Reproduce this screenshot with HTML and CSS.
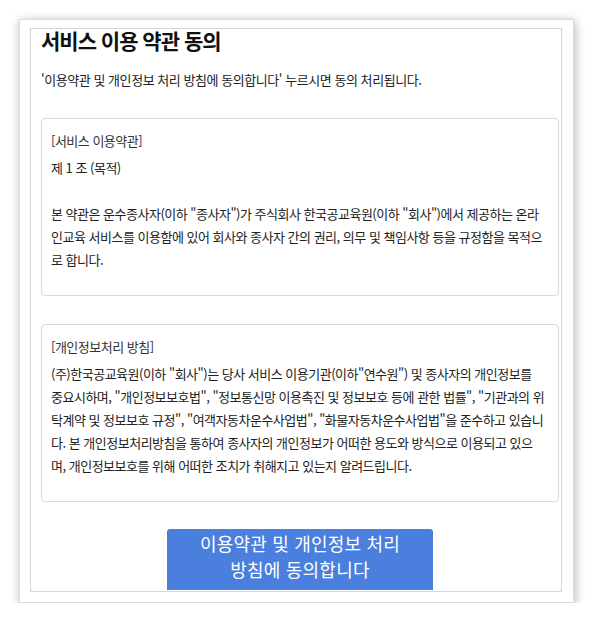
FILE: index.html
```html
<!DOCTYPE html>
<html lang="ko">
<head>
    <meta charset="UTF-8" />
    <meta name="viewport" content="width=device-width, initial-scale=1.0" />
    <title>서비스 이용 약관 동의</title>
    <link rel="stylesheet" href="styles.css">
</head>
<body>
    <div class="frame">
        <div class="agree-box">
            <h2 class="agree-title">서비스 이용 약관 동의</h2>
            <p class="agree-desc">'이용약관 및 개인정보 처리 방침에 동의합니다' 누르시면 동의 처리됩니다.</p>

            <div class="terms-card">
                <p class="terms-head">[서비스 이용약관]</p>
                <p class="terms-text">제 1 조 (목적)<br><br>본 약관은 운수종사자(이하 "종사자")가 주식회사 한국공교육원(이하 "회사")에서 제공하는 온라<br>인교육 서비스를 이용함에 있어 회사와 종사자 간의 권리, 의무 및 책임사항 등을 규정함을 목적으<br>로 합니다.</p>
            </div>

            <div class="terms-card">
                <p class="terms-head">[개인정보처리 방침]</p>
                <p class="terms-text">(주)한국공교육원(이하 "회사")는 당사 서비스 이용기관(이하"연수원") 및 종사자의 개인정보를<br>중요시하며, "개인정보보호법", "정보통신망 이용촉진 및 정보보호 등에 관한 법률", "기관과의 위<br>탁계약 및 정보보호 규정", "여객자동차운수사업법", "화물자동차운수사업법"을 준수하고 있습니<br>다. 본 개인정보처리방침을 통하여 종사자의 개인정보가 어떠한 용도와 방식으로 이용되고 있으<br>며, 개인정보보호를 위해 어떠한 조치가 취해지고 있는지 알려드립니다.</p>
            </div>

            <div class="btn-row">
                <button class="agree-btn">이용약관 및 개인정보 처리 방침에 동의합니다</button>
            </div>
        </div>
    </div>
</body>
</html>
```

FILE: styles.css
```css
    body {
        margin: 0;
        background-color: #ffffff;
        font-family: "Noto Sans CJK KR", "Noto Sans", sans-serif;
        color: #222222;
    }

    .frame {
        box-sizing: border-box;
        width: 555px;
        height: 584px;
        margin: 19px 0 0 19px;
        padding: 8px 0 0 10px;
        border: 1px solid #dcdcdc;
        background-color: #ffffff;
        box-shadow: 1px 2px 10px rgba(0, 0, 0, 0.3);
    }

    .agree-box {
        box-sizing: border-box;
        width: 532px;
        height: 564px;
        padding: 0 2px 0 10px;
        border: 1px solid #d6d6d6;
    }

    .agree-title {
        margin: 0;
        font-size: 21px;
        line-height: 22px;
        font-weight: bold;
        color: #111111;
        letter-spacing: -1px;
    }

    .agree-desc {
        margin: 19px 0 28px;
        font-size: 13px;
        line-height: 20px;
        letter-spacing: -0.45px;
    }

    .terms-card {
        padding: 10px 5px 24px 9px;
        margin-bottom: 28px;
        border: 1px solid #dadada;
        border-radius: 4px;
        font-size: 13px;
        line-height: 23px;
        letter-spacing: -0.5px;
    }

    .terms-head {
        margin: 0 0 4px;
        color: #333333;
    }

    .terms-text {
        margin: 0;
    }

    .btn-row {
        display: flex;
        justify-content: center;
        height: 61px;
        margin-top: -1px;
        overflow: hidden;
    }

    .agree-btn {
        flex-shrink: 0;
        width: 266px;
        height: 72px;
        padding: 1px 28px 0;
        border: none;
        border-radius: 3px;
        background-color: #4a7fdd;
        color: #ffffff;
        font-family: inherit;
        font-size: 18px;
        line-height: 26px;
        letter-spacing: 0.2px;
        align-self: flex-start;
        display: flex;
        align-items: flex-start;
        justify-content: center;
        text-align: center;
    }
```
